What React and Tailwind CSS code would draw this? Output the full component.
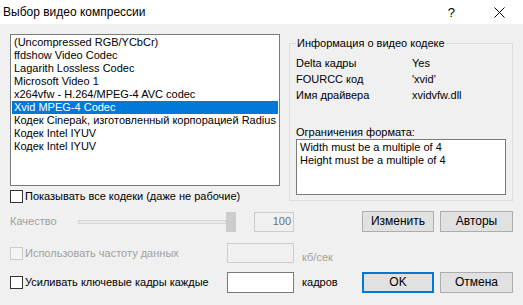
import React from "react";

const codecs = [
  "(Uncompressed RGB/YCbCr)",
  "ffdshow Video Codec",
  "Lagarith Lossless Codec",
  "Microsoft Video 1",
  "x264vfw - H.264/MPEG-4 AVC codec",
  "Xvid MPEG-4 Codec",
  "Кодек Cinepak, изготовленный корпорацией Radius",
  "Кодек Intel IYUV",
  "Кодек Intel IYUV",
];

const info = [
  ["Delta кадры", "Yes"],
  ["FOURCC код", "'xvid'"],
  ["Имя драйвера", "xvidvfw.dll"],
];

function Checkbox({ disabled, label }) {
  return (
    <div className="flex items-center">
      <span
        className={`w-[13px] h-[13px] border ${
          disabled ? "border-[#cccccc] bg-[#f4f4f4]" : "border-[#333333] bg-white"
        }`}
      />
      <span className={`ml-[2px] ${disabled ? "text-[#a0a0a0]" : "text-black"}`}>{label}</span>
    </div>
  );
}

function Button({ children, primary }) {
  return (
    <button
      className={`w-full h-[21px] flex items-center justify-center bg-[#e1e1e1] text-black text-[12px] ${
        primary ? "border-2 border-[#0078d7]" : "border border-[#adadad]"
      }`}
    >
      {children}
    </button>
  );
}

export default function App() {
  const selected = 5;

  return (
    <div
      className="w-[523px] h-[305px] bg-[#f0f0f0] flex flex-col text-[11px] leading-[13px] text-black overflow-hidden"
      style={{ fontFamily: '"Liberation Sans", Arial, sans-serif' }}
    >
      {/* Title bar */}
      <div className="h-[24px] bg-white flex items-center shrink-0">
        <span className="ml-[3px] text-[12px]">Выбор видео компрессии</span>
        <span className="ml-auto text-[13px] mr-[39px]">?</span>
        <svg width="11" height="11" viewBox="0 0 11 11" className="mr-[18px]">
          <path d="M0.5 0.5 L10.5 10.5 M10.5 0.5 L0.5 10.5" stroke="#000" strokeWidth="1" />
        </svg>
      </div>

      {/* Top section */}
      <div className="flex mt-[10px] ml-[10px]">
        <div className="flex flex-col w-[270px]">
          <div className="h-[152px] bg-white border border-[#7a7a7a] p-[1px]">
            {codecs.map((c, i) => (
              <div
                key={i}
                className={`h-[13px] pl-[2px] whitespace-nowrap ${
                  i === selected ? "bg-[#0078d7] text-white" : ""
                }`}
              >
                {c}
              </div>
            ))}
          </div>
          <div className="mt-[4px]">
            <Checkbox label="Показывать все кодеки (даже не рабочие)" />
          </div>
        </div>

        <fieldset className="ml-[9px] mt-[3px] w-[224px] h-[164px] border border-[#dcdcdc] px-[6px] m-0">
          <legend className="px-[1px]">Информация о видео кодеке</legend>
          <div className="mt-[5px]">
            {info.map(([k, v]) => (
              <div key={k} className="flex h-[16px] items-center">
                <span className="w-[116px]">{k}</span>
                <span>{v}</span>
              </div>
            ))}
          </div>
          <div className="mt-[23px]">Ограничения формата:</div>
          <div className="h-[56px] bg-white border border-[#7a7a7a] pl-[3px] pt-[1px]">
            <div>Width must be a multiple of 4</div>
            <div>Height must be a multiple of 4</div>
          </div>
        </fieldset>
      </div>

      {/* Quality row */}
      <div className="flex items-center h-[21px] mt-[8px] ml-[10px]">
        <span className="w-[68px] text-[#a0a0a0]">Качество</span>
        <div className="w-[158px] h-[21px] flex items-center">
          <div className="flex-1 h-[4px] bg-[#e7eaea] border border-[#d6d6d6]" />
          <div className="w-[10px] h-[20px] bg-[#cccccc]" />
        </div>
        <div className="ml-[18px] w-[40px] h-[20px] border border-[#cccccc] flex items-center justify-end pr-[2px] text-[#6d6d6d]">
          100
        </div>
        <div className="ml-[68px] w-[72px]">
          <Button>Изменить</Button>
        </div>
        <div className="ml-[6px] w-[73px]">
          <Button>Авторы</Button>
        </div>
      </div>

      {/* Data rate row */}
      <div className="flex items-center h-[20px] mt-[11px] ml-[10px]">
        <div className="w-[217px]">
          <Checkbox disabled label="Использовать частоту данных" />
        </div>
        <div className="w-[67px] h-[20px] border border-[#cccccc] bg-[#f0f0f0]" />
        <span className="ml-[8px] mt-[8px] text-[#a0a0a0]">кб/сек</span>
      </div>

      {/* Key frames row */}
      <div className="flex items-center h-[21px] mt-[9px] ml-[10px]">
        <div className="w-[217px]">
          <Checkbox label="Усиливать ключевые кадры каждые" />
        </div>
        <div className="w-[67px] h-[21px] border border-[#7a7a7a] bg-white" />
        <span className="ml-[8px] w-[60px]">кадров</span>
        <div className="w-[72px]">
          <Button primary>OK</Button>
        </div>
        <div className="ml-[6px] w-[73px]">
          <Button>Отмена</Button>
        </div>
      </div>
    </div>
  );
}
